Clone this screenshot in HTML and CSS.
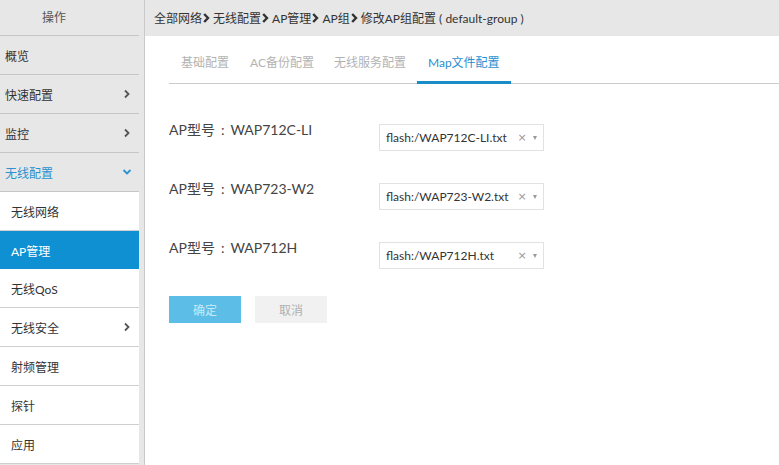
FILE: index.html
```html
<!DOCTYPE html>
<html lang="zh-CN">
<head>
<meta charset="utf-8">
<title>修改AP组配置</title>
<link rel="stylesheet" href="styles.css">
</head>
<body>
<div class="app">
  <aside class="sidebar">
    <div class="side-head">操作</div>
    <ul class="menu">
      <li class="item">概览</li>
      <li class="item">快速配置<svg class="chev" viewBox="0 0 6 10" width="6" height="10"><path d="M1 1.5 L4.5 5 L1 8.5" fill="none" stroke="#555" stroke-width="1.8"/></svg></li>
      <li class="item">监控<svg class="chev" viewBox="0 0 6 10" width="6" height="10"><path d="M1 1.5 L4.5 5 L1 8.5" fill="none" stroke="#555" stroke-width="1.8"/></svg></li>
      <li class="item open">无线配置<svg class="chev-down" viewBox="0 0 10 6" width="10" height="6"><path d="M1.5 1 L5 4.5 L8.5 1" fill="none" stroke="#2a92d0" stroke-width="1.8"/></svg></li>
      <li class="sub">无线网络</li>
      <li class="sub active">AP管理</li>
      <li class="sub">无线QoS</li>
      <li class="sub">无线安全<svg class="chev" viewBox="0 0 6 10" width="6" height="10"><path d="M1 1.5 L4.5 5 L1 8.5" fill="none" stroke="#555" stroke-width="1.8"/></svg></li>
      <li class="sub">射频管理</li>
      <li class="sub">探针</li>
      <li class="sub">应用</li>
    </ul>
  </aside>
  <main class="main">
    <div class="crumbs">
      <span>全部网络</span><svg class="sep" viewBox="0 0 7 10" width="7" height="10"><path d="M1.2 1 L5 5 L1.2 9" fill="none" stroke="#333" stroke-width="2.4"/></svg><span>无线配置</span><svg class="sep" viewBox="0 0 7 10" width="7" height="10"><path d="M1.2 1 L5 5 L1.2 9" fill="none" stroke="#333" stroke-width="2.4"/></svg><span>AP管理</span><svg class="sep" viewBox="0 0 7 10" width="7" height="10"><path d="M1.2 1 L5 5 L1.2 9" fill="none" stroke="#333" stroke-width="2.4"/></svg><span>AP组</span><svg class="sep" viewBox="0 0 7 10" width="7" height="10"><path d="M1.2 1 L5 5 L1.2 9" fill="none" stroke="#333" stroke-width="2.4"/></svg><span>修改AP组配置 ( default-group )</span>
    </div>
    <div class="content">
      <nav class="tabs">
        <span class="tab t1">基础配置</span>
        <span class="tab t2">AC备份配置</span>
        <span class="tab t3">无线服务配置</span>
        <span class="tab t4 active">Map文件配置</span>
      </nav>
      <div class="form">
        <div class="row">
          <label class="label">AP型号<span class="colon">:</span>WAP712C-LI</label>
          <div class="select"><span class="val">flash:/WAP712C-LI.txt</span><span class="clear">×</span><span class="arrow"></span></div>
        </div>
        <div class="row">
          <label class="label">AP型号<span class="colon">:</span>WAP723-W2</label>
          <div class="select"><span class="val">flash:/WAP723-W2.txt</span><span class="clear">×</span><span class="arrow"></span></div>
        </div>
        <div class="row">
          <label class="label">AP型号<span class="colon">:</span>WAP712H</label>
          <div class="select"><span class="val">flash:/WAP712H.txt</span><span class="clear">×</span><span class="arrow"></span></div>
        </div>
        <div class="actions">
          <button class="btn ok">确定</button>
          <button class="btn cancel">取消</button>
        </div>
      </div>
    </div>
  </main>
</div>
</body>
</html>
```

FILE: styles.css
```css
* { box-sizing: border-box; }
html, body { margin: 0; padding: 0; }
body {
  width: 779px;
  height: 465px;
  overflow: hidden;
  font-family: Lato, "Noto Sans CJK SC", sans-serif;
  font-size: 12px;
  color: #333;
  background: #fff;
}
.app { display: flex; height: 465px; }

.sidebar {
  width: 145px;
  flex: none;
  background: #e7e7e7;
  border-right: 1px solid #c9c9c9;
  padding-right: 5px;
}
.side-head {
  height: 36px;
  line-height: 35px;
  padding-left: 42px;
  color: #555;
  border-bottom: 1px solid #c6c6c6;
}
.menu { list-style: none; margin: 0; padding: 0; }
.item, .sub {
  height: 39px;
  display: flex;
  align-items: center;
  justify-content: space-between;
  border-bottom: 1px solid #c6c6c6;
  padding: 0 9px 0 5px;
  color: #333;
}
.item.open { color: #2a92d0; padding-right: 7px; }
.sub { background: #fff; padding-left: 11px; border-bottom-color: #cfcfcf; }
.sub.active { background: #0f90d3; color: #fff; border-bottom: none; height: 38px; }
.chev, .chev-down { flex: none; }

.main { flex: 1; display: flex; flex-direction: column; }
.crumbs {
  height: 36px;
  background: #e7e7e7;
  display: flex;
  align-items: center;
  padding: 0 0 1px 9px;
  color: #333;
  white-space: pre;
}
.sep { margin: 0 3px 0 1px; }

.content { padding-left: 24px; }
.tabs {
  display: flex;
  height: 48px;
  align-items: center;
  border-bottom: 1px solid #cccccc;
  padding-top: 3px;
}
.tab {
  position: relative;
  color: #b3b3b3;
  height: 100%;
  display: flex;
  align-items: center;
  padding: 0 11px;
}
.t1 { margin-left: 1px; }
.t2 { margin-left: -1px; }
.t3 { margin-left: -2px; }
.t4 { margin-left: 0; }
.tab.active { color: #2a8fcf; }
.tab.active::after {
  content: "";
  position: absolute;
  left: 0; right: 0; bottom: -1px;
  height: 3px;
  background: #1a8dc8;
}

.form { padding-top: 36px; }
.row { display: flex; height: 59px; align-items: flex-start; }
.label {
  width: 210px;
  flex: none;
  font-size: 14px;
  line-height: 20px;
  color: #444;
}
.colon { display: inline-block; padding: 0 6px 0 6px; }
.select {
  margin-top: 4px;
  width: 165px;
  height: 27px;
  border: 1px solid #e2e2e2;
  display: flex;
  align-items: center;
  padding: 0 0 0 6px;
  color: #333;
}
.val { flex: 1; }
.clear { color: #999; font-size: 11px; width: 12px; text-align: center; margin-right: 5px; font-family: "DejaVu Sans", sans-serif; }
.arrow {
  width: 0; height: 0;
  border-left: 2.5px solid transparent;
  border-right: 2.5px solid transparent;
  border-top: 4px solid #999;
  margin-right: 6px;
}
.actions { display: flex; gap: 14px; margin-top: -1px; }
.btn {
  width: 72px;
  height: 27px;
  border: none;
  font-family: Lato, "Noto Sans CJK SC", sans-serif;
  font-size: 12px;
  padding: 0;
}
.ok { background: #5cbde6; color: #c9e9f8; }
.cancel { background: #f1f1f1; color: #b0b0b0; }
```
